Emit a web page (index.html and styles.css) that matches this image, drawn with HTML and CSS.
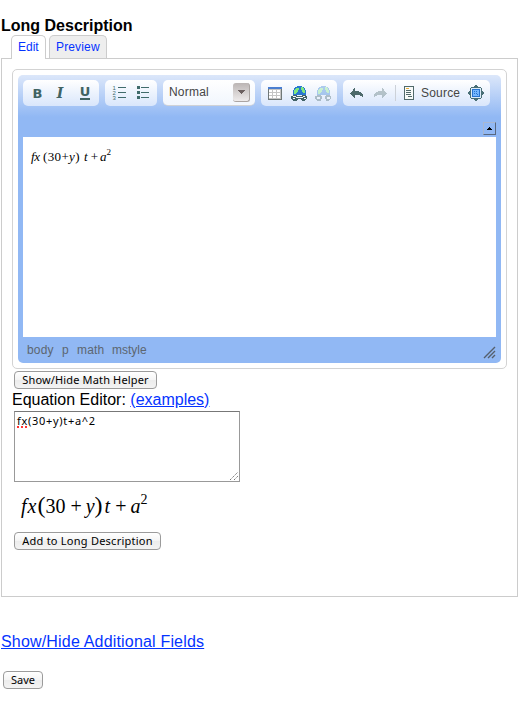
FILE: index.html
```html
<!DOCTYPE html>
<html lang="en">
<head>
<meta charset="utf-8">
<title>Long Description</title>
<link rel="stylesheet" href="styles.css">
</head>
<body>
<h1 class="title">Long Description</h1>
<nav class="tabs">
  <a class="tab tab-active">Edit</a>
  <a class="tab tab-preview">Preview</a>
</nav>
<main class="panel">
  <section class="editor">
    <div class="editor-skin">
      <div class="toolbar">
        <div class="group">
          <span class="tool bold">B</span>
          <span class="tool italic">I</span>
          <span class="tool underline"><span>U</span></span>
        </div>
        <div class="group">
          <span class="tool"><svg class="icon" viewBox="0 0 16 16"><g fill="#406b6b"><path d="M7 2h8v1H7zM7 7h8v1H7zM7 12h8v1H7z"/></g><g class="digits"><text x="1.5" y="5">1</text><text x="1.5" y="10">2</text><text x="1.5" y="15">3</text></g></svg></span>
          <span class="tool"><svg class="icon" viewBox="0 0 16 16"><path fill="#406b6b" d="M2 1h3v3H2zM2 6h3v3H2zM2 11h3v3H2zM6 2h8v1H6zM6 7h8v1H6zM6 12h8v1H6z"/></svg></span>
        </div>
        <div class="combo"><span class="combo-text">Normal</span><span class="combo-arrow"><svg width="7" height="4" viewBox="0 0 7 4"><path fill="#6c6060" d="M0 0h7v1H6v1H5v1H4v1H3V3H2V2H1V1H0z"/></svg></span></div>
        <div class="group">
          <span class="tool"><svg class="icon" viewBox="0 0 16 16"><path fill="#6f7777" d="M1 2h14v13H1z"/><path fill="#4a7ed0" d="M1 2h14v2H1z"/><path fill="#c4c4c4" d="M2 4h12v10H2z"/><path fill="#fff" d="M2 5h3v2H2zM6 5h3v2H6zM10 5h3v2h-3zM2 8h3v2H2zM6 8h3v2H6zM10 8h3v2h-3zM2 11h3v2H2zM6 11h3v2H6zM10 11h3v2h-3z"/></svg></span>
          <span class="tool"><svg class="icon" viewBox="0 0 16 16"><path fill="#2878d0" d="M6 1h5v1h2v1h1v2h1v5H2V5h1V3h1V2h2z"/><path fill="#7ee77e" d="M5 3h3v2H7v2H6v1H5v1H3V5h1V4h1zM10 2h2v1h1v2h1v3h-2V7h-1V5h-1z"/><path fill="#416267" d="M2 10h4v1h5v-1h4v1h1v3h-1v1h-1v1h-3v-1h-1v-1H7v1H6v1H2v-1H1v-1H0v-3h2z"/><path fill="#f4f8fc" d="M2 11h3v1h7v-1h2v1h-2v1H5v-1H2zM2 13h2v1H2zM13 13h2v1h-2z"/></svg></span>
          <span class="tool faded"><svg class="icon" viewBox="0 0 16 16"><path fill="#2878d0" d="M6 1h5v1h2v1h1v2h1v5H2V5h1V3h1V2h2z"/><path fill="#7ee77e" d="M5 3h3v2H7v2H6v1H5v1H3V5h1V4h1zM10 2h2v1h1v2h1v3h-2V7h-1V5h-1z"/><path fill="#416267" d="M2 10h4v1h1v3H6v2H2v-1H1v-1H0v-3h2zM11 10h4v1h1v3h-1v1h-1v1h-3v-2h-1v-3h1z"/><path fill="#f4f8fc" d="M2 12h3v2H2zM12 12h3v2h-3z"/></svg></span>
        </div>
        <div class="group">
          <span class="tool"><svg class="icon back" viewBox="0 0 16 16"><path fill="#4d6a6b" d="M6 3h1v3h4v1h2v1h1v1h1v3h-1v-1h-2v-1H7v3H6v-1H5v-1H4v-1H3V9H2V8h1V7h1V6h1V4h1z"/></svg></span>
          <span class="tool faded"><svg class="icon" viewBox="0 0 16 16"><path fill="#4d6a6b" d="M10 3H9v3H5v1H3v1H2v1H1v3h1v-1h2v-1h5v3h1v-1h1v-1h1v-1h1V9h1V8h-1V7h-1V6h-1V4h-1z"/></svg></span>
          <span class="separator"></span>
          <span class="tool"><svg class="icon" viewBox="0 0 16 16"><path fill="#50696a" d="M3 1h10v14H3z"/><path fill="#f7faf9" d="M4 2h8v12H4z"/><path fill="#e8ac38" d="M5 3h3v1H5z"/><path fill="#50696a" d="M5 5h5v1H5zM5 7h5v1H5zM5 9h5v1H5zM7 11h4v1H7z"/></svg></span>
          <span class="source">Source</span>
          <span class="tool"><svg class="icon" viewBox="0 0 16 16"><path fill="#496f76" d="M7 0h2v1h1v1h3v1h1v3h1v1h1v2h-1v1h-1v3h-1v1h-3v1H9v1H7v-1H6v-1H3v-1H2v-3H1V9H0V7h1V6h1V3h1V2h3V1h1z"/><path fill="#dcecf9" d="M3 3h10v10H3z"/><path fill="#2874cf" d="M4 4h8v8H4z"/><path fill="#75b7ff" d="M5 5h6v6H5z"/><path fill="#2874cf" d="M6 6h1v1H6zM8 6h1v1H8zM6 8h1v1H6zM8 8h1v1H8zM9 9h1v1H9z"/></svg></span>
        </div>
      </div>
      <div class="collapse-row"><span class="collapse"><svg width="5" height="3" viewBox="0 0 5 3"><path d="M2 0h1v1h1v1h1v1H0V2h1V1h1z"/></svg></span></div>
      <div class="document"><div class="math math-small"><i class="fn">fx</i><span class="small-group">(30+<i>y</i>)</span><i>t</i><span class="op">+</span><i>a</i><sup>2</sup></div></div>
      <div class="status">
        <span class="path-body">body</span><span class="path-p">p</span><span class="path-math">math</span><span class="path-style">mstyle</span>
        <svg class="resize" width="13" height="13" viewBox="0 0 13 13"><path stroke="#555f6c" stroke-width="1.4" d="M1 12L12 1M5 12L12 5M9 12l3-3"/></svg>
      </div>
    </div>
  </section>
  <button class="btn btn-helper">Show/Hide Math Helper</button>
  <div class="equation-label">Equation Editor: <a class="link">(examples)</a></div>
  <div class="input"><span class="misspelt">fx</span>(30+y)t+a^2<svg class="grip" width="8" height="8" viewBox="0 0 8 8"><path stroke="#777" stroke-dasharray="1.4 .8" d="M0 8l8-8M4 8l4-4"/></svg></div>
  <div class="math math-large"><i class="fn">fx</i><span class="paren">(</span>30<span class="plus">+</span><i>y</i><span class="paren">)</span><i>t</i><span class="plus plus-last">+</span><i>a</i><sup>2</sup></div>
  <button class="btn btn-add">Add to Long Description</button>
</main>
<a class="link additional">Show/Hide Additional Fields</a>
<button class="btn btn-save">Save</button>
</body>
</html>
```
FILE: styles.css
```css
* { box-sizing: border-box; }
body {
  margin: 0;
  padding: 16px 1px 0;
  background: #fff;
  color: #000;
  font-family: "Liberation Sans", sans-serif;
  font-size: 16px;
}
.title { margin: 0; font-size: 16px; line-height: 19px; }
.tabs { display: flex; gap: 3px; padding-left: 10px; }
.tab {
  height: 23px;
  border: 1px solid #ccc;
  border-bottom: 0;
  border-radius: 5px 5px 0 0;
  padding: 0 6px;
  color: #0433ff;
  font-size: 12px;
  line-height: 22px;
}
.tab-active { width: 35px; height: 24px; margin-bottom: -1px; background: #fff; position: relative; }
.tab-preview { width: 58px; background: #eee; letter-spacing: .15px; }
.panel {
  width: 517px;
  height: 539px;
  border: 1px solid #ccc;
  padding: 10px 0 0 10px;
}
.editor {
  width: 495px;
  height: 300px;
  border: 1px solid #d3d3d3;
  border-radius: 5px;
  padding: 5px;
}
.editor-skin {
  height: 288px;
  border-radius: 5px;
  padding: 5px 5px 0;
  background: #91b8f4 linear-gradient(#dce7fa, #91b8f4) no-repeat 0 0 / 100% 42px;
}
.toolbar { display: flex; gap: 6px; height: 42px; }
.group {
  display: flex;
  align-items: center;
  height: 26px;
  padding: 0 2px;
  border-radius: 5px;
  background: linear-gradient(#fff, #d9e6fb);
}
.tool {
  display: flex;
  align-items: center;
  justify-content: center;
  width: 24px;
  height: 26px;
  color: #406363;
}
.icon { width: 16px; height: 16px; shape-rendering: crispEdges; }
.back { margin-right: 2px; }
.digits { fill: #406b6b; font: 6px "Liberation Sans", sans-serif; }
.bold { font: bold 13px "DejaVu Sans", sans-serif; padding-left: 1px; }
.italic { font: italic bold 14px "DejaVu Serif", serif; padding-right: 2px; }
.underline { font: bold 13px "DejaVu Sans", sans-serif; }
.underline span { height: 14px; line-height: 12px; border-bottom: 2px solid #406363; }
.faded { opacity: .35; }
.combo {
  display: flex;
  justify-content: space-between;
  width: 92px;
  height: 26px;
  padding: 3px 5px 0 6px;
  border-radius: 5px;
  background: linear-gradient(#fff, #f1f6fd);
  border-bottom: 1px solid #d0d2d6;
}
.combo-text { color: #454545; font-size: 12px; line-height: 18px; letter-spacing: .2px; }
.combo-arrow {
  display: flex;
  align-items: center;
  justify-content: center;
  width: 17px;
  height: 19px;
  border-radius: 3px;
  border-right: 1px solid #aaa4a2;
  border-bottom: 1px solid #aaa4a2;
  background: linear-gradient(#bbb5b4, #eeebeb);
}
.separator { width: 1px; height: 16px; margin: 0 1px 0 2px; background: #ccd1d8; }
.source { width: 43px; color: #454545; font-size: 12px; letter-spacing: .2px; }
.collapse-row { display: flex; justify-content: flex-end; height: 15px; }
.collapse {
  display: flex;
  align-items: center;
  justify-content: center;
  width: 13px;
  height: 13px;
  border: 1px solid;
  border-color: #a9b7d0 #586880 #586880 #a9b7d0;
}
.document { height: 200px; padding: 10px 8px; background: #fff; }
.status {
  display: flex;
  height: 26px;
  padding-left: 4px;
  color: #5c6670;
  font-size: 12px;
  line-height: 26px;
}
.path-body { width: 35px; letter-spacing: .2px; }
.path-p { width: 15px; }
.path-math { width: 35px; letter-spacing: .2px; }
.resize { margin: 9px 0 0 auto; }
.math { display: flex; font-family: "Liberation Serif", serif; white-space: nowrap; }
.math-small { font-size: 13px; line-height: 20px; }
.math-small .fn { width: 12px; letter-spacing: -.3px; }
.small-group { width: 41px; letter-spacing: .35px; }
.op { margin: 0 2px 0 3px; }
.math sup { font-size: .7em; line-height: 1; align-self: flex-start; }
.math-small sup { padding-top: 1px; }
.btn {
  display: block;
  height: 18px;
  border: 1px solid #9b9b9b;
  border-radius: 4px;
  padding: 0 0 1px;
  background: linear-gradient(#fff, #f4f4f4 50%, #ececec 51%, #f3f3f3);
  color: #000;
  font: 11px/15px "Noto Sans", sans-serif;
  white-space: nowrap;
}
.btn-helper { width: 143px; margin: 2px 0 0 2px; letter-spacing: .15px; }
.btn-add { width: 147px; margin: 9px 0 0 2px; letter-spacing: .24px; }
.btn-save { width: 40px; margin: 20px 0 0 2px; }
.equation-label { height: 22px; line-height: 21px; }
.link { color: #0433ff; text-decoration: underline; }
.input {
  position: relative;
  width: 226px;
  height: 71px;
  margin-left: 2px;
  border: 1px solid #999;
  border-top-color: #777;
  padding: 1px 2px;
  font: 11px/15px "Noto Sans", sans-serif;
  letter-spacing: .7px;
}
.misspelt { text-decoration: underline dotted #f33 2px; text-underline-offset: 1px; }
.grip { position: absolute; right: 1px; bottom: 1px; }
.math-large { height: 41px; padding: 11px 0 0 9px; font-size: 20px; line-height: 26px; }
.math-large .fn { letter-spacing: 1px; }
.paren { font-size: 24px; line-height: 25px; }
.plus { margin: 0 4px 0 5px; }
.plus-last { margin: 0 4px; }
.math-large .paren + i { padding: 0 1px 0 2px; }
.additional { display: block; margin-top: 35px; line-height: 19px; letter-spacing: .18px; }
```
